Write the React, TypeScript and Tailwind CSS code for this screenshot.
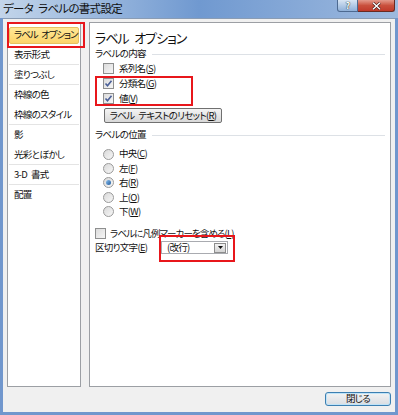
const font = "font-['Noto_Sans_CJK_JP','Noto_Sans',sans-serif] [font-feature-settings:'palt']";

function Key({ k }: { k: string }) {
  return (
    <span>
      (<span className="underline underline-offset-1">{k}</span>)
    </span>
  );
}

function CheckBox({ checked }: { checked?: boolean }) {
  return (
    <span className="flex h-[11px] w-[11px] shrink-0 items-center justify-center border border-[#8e8f8f] bg-gradient-to-br from-[#dcdcdc] to-[#f6f6f6]">
      {checked && (
        <svg width="9" height="9" viewBox="0 0 9 9">
          <path d="M1.5 4.5 L3.5 6.8 L7.5 1.8" fill="none" stroke="#4a5f97" strokeWidth="1.6" />
        </svg>
      )}
    </span>
  );
}

function Radio({ checked }: { checked?: boolean }) {
  return (
    <span className="flex h-[11px] w-[11px] shrink-0 items-center justify-center rounded-full border border-[#9a9a9a] bg-gradient-to-br from-[#d9d9d9] to-[#f7f7f7]">
      {checked && <span className="h-[5px] w-[5px] rounded-full bg-gradient-to-br from-[#8fc3f0] to-[#1c5a9c]" />}
    </span>
  );
}

const sideItems: { label: string; sep?: boolean; selected?: boolean }[] = [
  { label: "ラベル\u2002オプション", selected: true },
  { label: "表示形式", sep: true },
  { label: "塗りつぶし", sep: true },
  { label: "枠線の色" },
  { label: "枠線のスタイル", sep: true },
  { label: "影" },
  { label: "光彩とぼかし", sep: true },
  { label: "3-D\u2002書式", sep: true },
  { label: "配置" },
];

const positions = [
  { label: "中央", k: "C" },
  { label: "左", k: "F" },
  { label: "右", k: "R", checked: true },
  { label: "上", k: "O" },
  { label: "下", k: "W" },
];

function SectionLabel({ text }: { text: string }) {
  return (
    <div className="flex h-[14px] items-center pl-[5px] pr-[5px]">
      <span>{text}</span>
      <span className="ml-[6px] h-px flex-1 bg-[#dde1e6]" />
    </div>
  );
}

export default function App() {
  return (
    <div className={`relative flex h-[415px] w-[398px] flex-col overflow-hidden whitespace-nowrap bg-[#7197cd] text-[9.5px] leading-none tracking-[-0.7px] text-[#111] ${font}`}>
      {/* title bar */}
      <div className="flex h-[18px] shrink-0 items-start bg-gradient-to-r from-[#c3d5ea] via-[#7099d0] to-[#9db9de]">
        <span className="pl-[3px] pt-[3px] text-[11.5px] text-[#101010]">データ{"\u2002"}ラベルの書式設定</span>
        <div className="ml-auto mr-[3px] flex">
          <div className="flex h-[12px] w-[21px] items-center justify-center rounded-bl-[3px] border border-t-0 border-[#4d6a91] bg-gradient-to-b from-[#d8e5f3] to-[#8fb0d8]">
            <span className="text-[9px] font-bold leading-none text-white [text-shadow:0_0_1px_#233,0_0_1px_#233]">?</span>
          </div>
          <div className="flex h-[12px] w-[37px] items-center justify-center rounded-br-[3px] border border-l-0 border-t-0 border-[#6a2a22] bg-gradient-to-b from-[#e39a8c] via-[#c9503d] to-[#c0392a]">
            <svg width="9" height="8" viewBox="0 0 9 8">
              <path d="M1 0.8 L8 7.2 M8 0.8 L1 7.2" stroke="#3b1410" strokeWidth="2.6" />
              <path d="M1 0.8 L8 7.2 M8 0.8 L1 7.2" stroke="#fff" strokeWidth="1.5" />
            </svg>
          </div>
        </div>
      </div>

      {/* body */}
      <div className="mx-[3px] mb-[3px] flex flex-1 flex-col border-t border-[#8a9cb4] bg-[#f0f0f0] px-[4px] pt-[3px]">
        <div className="flex h-[365px] gap-[8px]">
          {/* left list */}
          <div className="flex w-[74px] shrink-0 flex-col border border-[#9c9fa4] bg-white pt-[2px]">
            {sideItems.map((it) => (
              <div key={it.label} className="px-[1px]">
                <div className={`flex h-[20px] items-center ${it.sep ? "border-b border-[#e4e4e4]" : ""}`}>
                  {it.selected ? (
                    <div className="flex h-[17px] w-full items-center rounded-[2px] border border-[#e6c060] bg-gradient-to-b from-[#ffe895] to-[#fcd46a] pl-[4px] tracking-[-1.1px]">
                      {it.label}
                    </div>
                  ) : (
                    <span className="pl-[5px]">{it.label}</span>
                  )}
                </div>
              </div>
            ))}
          </div>

          {/* right panel */}
          <div className="flex flex-1 flex-col border border-[#9c9fa4] bg-white pt-[5px]">
            <div className="flex h-[19px] items-center pl-[5px] text-[13px] tracking-[-1px]">ラベル{"\u2002"}オプション</div>
            <SectionLabel text="ラベルの内容" />
            <div className="flex h-[15px] items-center gap-[5px] pl-[13px]">
              <CheckBox />
              <span>
                系列名<Key k="S" />
              </span>
            </div>
            <div className="flex h-[15px] items-center gap-[5px] pl-[13px]">
              <CheckBox checked />
              <span>
                分類名<Key k="G" />
              </span>
            </div>
            <div className="flex h-[15px] items-center gap-[5px] pl-[13px]">
              <CheckBox checked />
              <span>
                値<Key k="V" />
              </span>
            </div>
            <div className="mt-[2px] pl-[14px]">
              <button className="flex h-[15px] w-[118px] items-center justify-center rounded-[2px] border border-[#707070] bg-gradient-to-b from-[#f4f4f4] to-[#d8d8d8] leading-none">
                ラベル{"\u2002"}テキストのリセット<Key k="R" />
              </button>
            </div>
            <div className="mt-[5px]">
              <SectionLabel text="ラベルの位置" />
            </div>
            <div className="mt-[5px] flex flex-col">
              {positions.map((p) => (
                <div key={p.k} className="flex h-[14.4px] items-center gap-[5px] pl-[13px]">
                  <Radio checked={p.checked} />
                  <span>
                    {p.label}
                    <Key k={p.k} />
                  </span>
                </div>
              ))}
            </div>
            <div className="mt-[8px] flex h-[14px] items-center gap-[4px] pl-[5px]">
              <CheckBox />
              <span className="tracking-[-0.9px]">
                ラベルに凡例マーカーを含める<Key k="L" />
              </span>
            </div>
            <div className="flex h-[14px] items-center pl-[5px]">
              <span className="w-[66px]">
                区切り文字<Key k="E" />
              </span>
              <div className="flex h-[13px] w-[67px] items-center border border-[#a9abb0] bg-white">
                <span className="flex-1 pl-[5px]">(改行)</span>
                <span className="mr-px flex h-[10px] w-[12px] items-center justify-center border border-[#8d8d8d] bg-gradient-to-b from-[#f2f2f2] to-[#d4d4d4]">
                  <svg width="5" height="3" viewBox="0 0 5 3">
                    <path d="M0 0 H5 L2.5 3 Z" fill="#111" />
                  </svg>
                </span>
              </div>
            </div>
          </div>
        </div>

        <div className="mt-[5px] flex justify-end">
          <button className="flex h-[14px] w-[66px] items-center justify-center rounded-[3px] border border-[#3c7fb1] bg-gradient-to-b from-[#f3f3f3] to-[#d9dde2] leading-none shadow-[inset_0_0_0_1px_#bfe3f8]">
            閉じる
          </button>
        </div>
      </div>

      {/* annotation boxes */}
      <div className="pointer-events-none absolute left-[7px] top-[22px] h-[26px] w-[78px] border-2 border-[#e8161b]" />
      <div className="pointer-events-none absolute left-[95px] top-[76px] h-[30px] w-[98px] border-2 border-[#e8161b]" />
      <div className="pointer-events-none absolute left-[159px] top-[235px] h-[27px] w-[76px] border-2 border-[#e8161b]" />
    </div>
  );
}
